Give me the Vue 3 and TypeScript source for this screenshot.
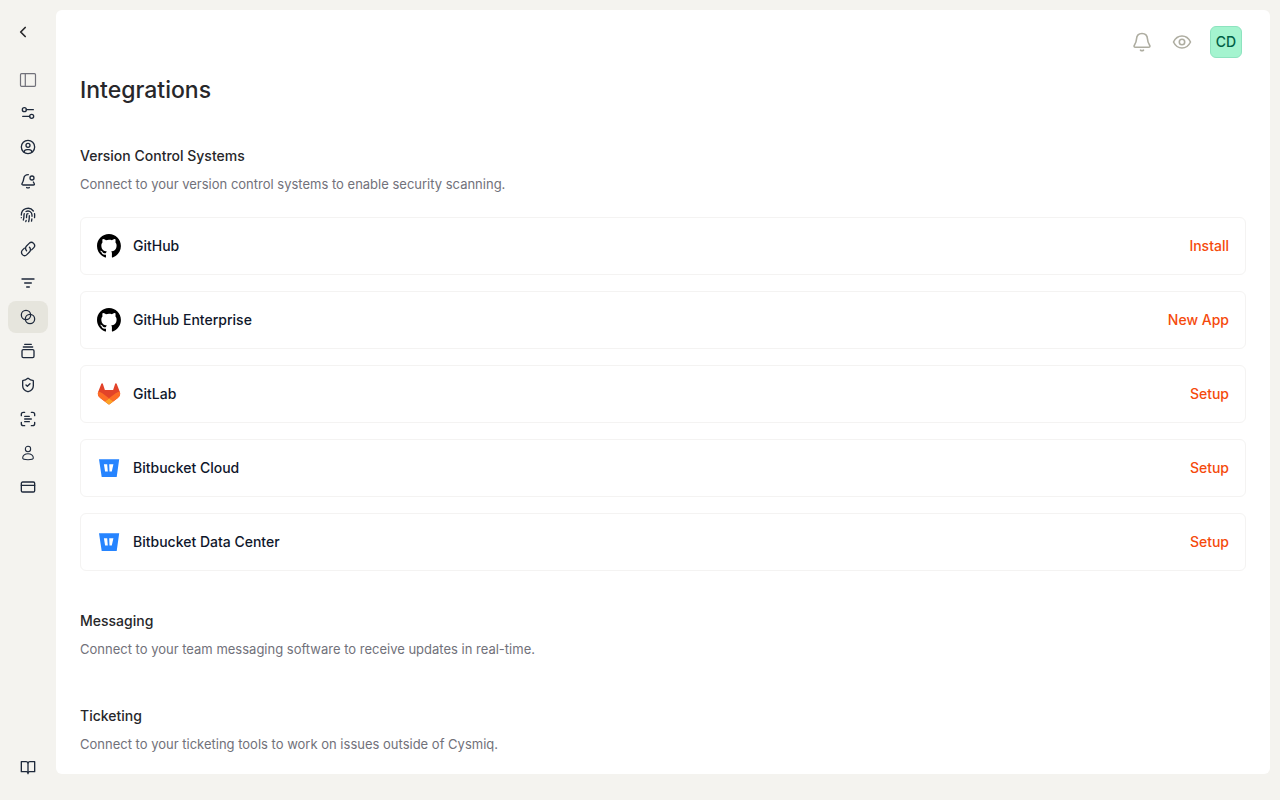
<script setup lang="ts">
interface NavItem {
  id: string
  label: string
  width: number
  paths: string[]
}

interface Integration {
  name: string
  logo: 'github' | 'gitlab' | 'bitbucket'
  action: string
}

interface Section {
  title: string
  description: string
  items: Integration[]
}

const navItems: NavItem[] = [
  { id: 'general', label: 'General', width: 2, paths: ['M9.500 7H20', 'M4 17h10.500', 'M9.500 7a3 3 0 1 1-6 0a3 3 0 1 1 6 0', 'M20.500 17a3 3 0 1 1-6 0a3 3 0 1 1 6 0'] },
  { id: 'profile', label: 'Profile', width: 2, paths: ['M22 12a10 10 0 1 1-20 0a10 10 0 1 1 20 0', 'M15 9.500a3 3 0 1 1-6 0a3 3 0 1 1 6 0', 'M6 19.500c.5-2.500 2-3.500 4.500-3.500h3c2.500 0 4 1 4.500 3.500'] },
  { id: 'notifications', label: 'Notifications', width: 2, paths: ['M12.500 2.500C8.500 2.500 6 5 5.600 8.500C5.200 12.500 4.600 13.500 3.200 15.500C2.300 17 3 18 4.500 18h15.500c1.500 0 2-1 1.300-2.300L20 13.500', 'M10 21.800c1.200.6 2.800.6 4 0', 'M21 7.500a3 3 0 1 1-6 0a3 3 0 1 1 6 0'] },
  { id: 'security', label: 'Security', width: 2, paths: ['M12 10a2 2 0 0 0-2 2c0 1.020-.1 2.510-.26 4', 'M14 13.120c0 2.380 0 6.380-1 8.880', 'M17.290 21.020c.12-.6.43-2.300.5-3.020', 'M2 12a10 10 0 0 1 18-6', 'M2 16h.01', 'M21.800 16c.2-2 .131-5.354 0-6', 'M5 19.500C5.500 18 6 15 6 12a6 6 0 0 1 .34-2', 'M8.650 22c.21-.66.45-1.320.57-2', 'M9 6.800a6 6 0 0 1 9 5.200v2'] },
  { id: 'links', label: 'Links', width: 2, paths: ['M9.800 14.600a5 5 0 0 1 0-7.100l3.900-3.900a4.700 4.700 0 0 1 6.700 6.700l-3 3', 'M14.200 9.400a5 5 0 0 1 0 7.100l-3.900 3.900a4.700 4.700 0 0 1-6.700-6.700l3-3'] },
  { id: 'filters', label: 'Filters', width: 2, paths: ['M3 6h18', 'M7 12h10', 'M10 18h4'] },
  { id: 'integrations', label: 'Integrations', width: 1.9, paths: ['M16 9a7 7 0 1 1-14 0a7 7 0 1 1 14 0', 'M22 15a7 7 0 1 1-14 0a7 7 0 1 1 14 0'] },
  { id: 'assets', label: 'Assets', width: 2, paths: ['M7 2h10', 'M5 6h14', 'M5 10h14a2 2 0 0 1 2 2v8a2 2 0 0 1-2 2H5a2 2 0 0 1-2-2v-8a2 2 0 0 1 2-2z'] },
  { id: 'policies', label: 'Policies', width: 2, paths: ['M20 13c0 5-3.500 7.500-7.660 8.950a1 1 0 0 1-.67-.01C7.500 20.500 4 18 4 13V6a1 1 0 0 1 1-1c2 0 4.500-1.200 6.240-2.720a1.170 1.170 0 0 1 1.520 0C14.510 3.810 17 5 19 5a1 1 0 0 1 1 1z', 'm9 12 2 2 4-4'] },
  { id: 'scans', label: 'Scans', width: 2, paths: ['M2 7V5a3 3 0 0 1 3-3h2', 'M17 2h2a3 3 0 0 1 3 3v2', 'M22 17v2a3 3 0 0 1-3 3h-2', 'M7 22H5a3 3 0 0 1-3-3v-2', 'M7 8h7', 'M7 12h10', 'M7 16h7'] },
  { id: 'members', label: 'Members', width: 1.6, paths: ['M16 6a4 4 0 1 1-8 0a4 4 0 1 1 8 0', 'M12 13c-4.500 0-8 3-8 6.500C4 21.500 8 22 12 22s8-.5 8-2.500C20 16 16.500 13 12 13z'] },
  { id: 'billing', label: 'Billing', width: 2, paths: ['M4 4.500h16a2 2 0 0 1 2 2v11a2 2 0 0 1-2 2H4a2 2 0 0 1-2-2v-11a2 2 0 0 1 2-2z', 'M2 9.500h20'] },
]

const activeItem = 'integrations'

const sections: Section[] = [
  {
    title: 'Version Control Systems',
    description: 'Connect to your version control systems to enable security scanning.',
    items: [
      { name: 'GitHub', logo: 'github', action: 'Install' },
      { name: 'GitHub Enterprise', logo: 'github', action: 'New App' },
      { name: 'GitLab', logo: 'gitlab', action: 'Setup' },
      { name: 'Bitbucket Cloud', logo: 'bitbucket', action: 'Setup' },
      { name: 'Bitbucket Data Center', logo: 'bitbucket', action: 'Setup' },
    ],
  },
  {
    title: 'Messaging',
    description: 'Connect to your team messaging software to receive updates in real-time.',
    items: [],
  },
  {
    title: 'Ticketing',
    description: 'Connect to your ticketing tools to work on issues outside of Cysmiq.',
    items: [],
  },
]
</script>

<template>
  <div class="app">
    <aside class="sidebar">
      <button class="back" type="button" aria-label="Back">
        <svg class="icon" viewBox="0 0 16 16"><path d="M10.200 3.500 5.700 8l4.500 4.500" stroke-width="1.700" /></svg>
      </button>
      <button class="toggle" type="button" aria-label="Toggle sidebar">
        <svg class="toggle-icon" viewBox="0 0 18 18">
          <rect x="1.500" y="2.700" width="15" height="12.600" rx="1" />
          <path d="M6.300 2.700v12.600" />
        </svg>
      </button>
      <nav class="nav" aria-label="Settings">
        <a
          v-for="item in navItems"
          :key="item.id"
          href="#"
          class="nav-link"
          :class="{ active: item.id === activeItem }"
          :aria-label="item.label"
        >
          <svg class="icon" viewBox="0 0 24 24" :stroke-width="item.width">
            <path v-for="d in item.paths" :key="d" :d="d" />
          </svg>
        </a>
      </nav>
      <a href="#" class="nav-link docs" aria-label="Documentation">
        <svg class="icon" viewBox="0 0 24 24" stroke-width="2">
          <path d="M12 6v16" />
          <path d="M2 4h7a3 3 0 0 1 3 2a3 3 0 0 1 3-2h7v15h-7.500a3 3 0 0 0-2.500 1.500A3 3 0 0 0 9.500 19H2z" />
        </svg>
      </a>
    </aside>

    <main class="panel">
      <header class="topbar">
        <button class="top-button" type="button" aria-label="Notifications">
          <svg class="top-icon" viewBox="0 0 20 20">
            <path d="M10 1.500c-3.300 0-5.300 2.300-5.500 5.500c-.2 3-.8 4.300-2 6c-.9 1.300-.4 2.300 1 2.300h13c1.400 0 1.900-1 1-2.300c-1.200-1.700-1.800-3-2-6c-.2-3.200-2.200-5.500-5.500-5.500z" />
            <path d="M8.500 18.200c.9.500 2.100.5 3 0" />
          </svg>
        </button>
        <button class="top-button" type="button" aria-label="Visibility">
          <svg class="top-icon" viewBox="0 0 20 20">
            <path d="M1.500 10C3.300 6.300 6.300 4 10 4s6.700 2.300 8.500 6c-1.800 3.700-4.800 6-8.500 6s-6.700-2.300-8.500-6z" />
            <circle cx="10" cy="10" r="2.700" />
          </svg>
        </button>
        <button class="avatar" type="button">CD</button>
      </header>

      <h1 class="title">Integrations</h1>

      <div class="sections">
        <section v-for="section in sections" :key="section.title">
          <div class="section-head">
            <h2>{{ section.title }}</h2>
            <p>{{ section.description }}</p>
          </div>
          <ul v-if="section.items.length" class="cards">
            <li v-for="item in section.items" :key="item.name" class="card">
              <svg v-if="item.logo === 'github'" class="logo" viewBox="0 0 98 98" aria-hidden="true">
                <path
                  fill="#000"
                  fill-rule="evenodd"
                  d="M48.854 0C21.839 0 0 22 0 49.217c0 21.756 13.993 40.172 33.405 46.690 2.427.49 3.316-1.059 3.316-2.362 0-1.141-.08-5.052-.08-9.127-13.590 2.934-16.420-5.867-16.420-5.867-2.184-5.704-5.420-7.170-5.420-7.170-4.448-3.015.324-3.015.324-3.015 4.934.326 7.523 5.052 7.523 5.052 4.367 7.496 11.404 5.378 14.235 4.074.404-3.178 1.699-5.378 3.074-6.600-10.839-1.141-22.243-5.378-22.243-24.283 0-5.378 1.940-9.778 5.014-13.200-.485-1.222-2.184-6.275.486-13.038 0 0 4.125-1.304 13.426 5.052a46.970 46.970 0 0 1 12.214-1.630c4.125 0 8.330.571 12.213 1.630 9.302-6.356 13.427-5.052 13.427-5.052 2.670 6.763.97 11.816.485 13.038 3.155 3.422 5.015 7.822 5.015 13.200 0 18.905-11.404 23.060-22.324 24.283 1.780 1.548 3.316 4.481 3.316 9.126 0 6.600-.08 11.897-.08 13.526 0 1.304.89 2.853 3.316 2.364 19.412-6.520 33.405-24.935 33.405-46.691C97.707 22 75.788 0 48.854 0z"
                />
              </svg>
              <svg v-else-if="item.logo === 'gitlab'" class="logo" viewBox="-1.040 -1.300 27 27" aria-hidden="true">
                <path fill="#E24329" d="M24.507 9.500l-.034-.09L21.082.562a.896.896 0 0 0-1.694.091l-2.290 7.010H7.825L5.535.653a.898.898 0 0 0-1.694-.09L.451 9.411.416 9.500a6.297 6.297 0 0 0 2.090 7.278l.012.01.03.022 5.160 3.867 2.560 1.935 1.554 1.176a1.051 1.051 0 0 0 1.268 0l1.555-1.176 2.560-1.935 5.197-3.890.014-.01A6.297 6.297 0 0 0 24.507 9.500z" />
                <path fill="#FC6D26" d="M24.507 9.500l-.034-.09a11.440 11.440 0 0 0-4.560 2.051l-7.447 5.632 4.742 3.584 5.197-3.890.014-.01A6.297 6.297 0 0 0 24.507 9.500z" />
                <path fill="#FCA326" d="M7.707 20.677l2.560 1.935 1.555 1.176a1.051 1.051 0 0 0 1.268 0l1.555-1.176 2.560-1.935-4.743-3.584-4.755 3.584z" />
                <path fill="#FC6D26" d="M5.010 11.461A11.430 11.430 0 0 0 .45 9.411L.416 9.500a6.297 6.297 0 0 0 2.090 7.278l.012.01.03.022 5.160 3.867 4.745-3.584-7.444-5.632z" />
              </svg>
              <svg v-else class="logo" viewBox="0 0 24 24" aria-hidden="true">
                <path fill="#2684FF" fill-rule="evenodd" d="M2 3.300h20.200L19.700 21H4.700zM6.900 8.300l1.200 7.200h2.700l-.6-7.200zM12.200 8.300l.3 7.200h2.300l1.600-7.200z" />
              </svg>
              <span class="card-name">{{ item.name }}</span>
              <button class="card-action" type="button">{{ item.action }}</button>
            </li>
          </ul>
        </section>
      </div>
    </main>
  </div>
</template>

<style>
body {
  margin: 0;
  background: #f4f3ef;
}
</style>

<style scoped>
* {
  box-sizing: border-box;
}

.app {
  display: flex;
  min-height: 100vh;
  background: #f4f3ef;
  color: #27272a;
  font-family: Inter, 'Liberation Sans', sans-serif;
  font-size: 14px;
  line-height: 20px;
}

button {
  padding: 0;
  border: 0;
  background: none;
  color: inherit;
  font: inherit;
  cursor: pointer;
}

svg {
  display: block;
  flex: none;
}

.sidebar {
  display: flex;
  flex: none;
  flex-direction: column;
  width: 56px;
  padding: 16px 8px 17px;
  color: #1e293b;
}

.icon,
.toggle-icon,
.top-icon {
  fill: none;
  stroke: currentColor;
  stroke-linecap: round;
  stroke-linejoin: round;
}

.icon {
  width: 16px;
  height: 16px;
}

.back,
.toggle {
  display: flex;
  align-items: center;
  height: 32px;
}

.back {
  width: 32px;
  padding-left: 7px;
  color: #27272a;
}

.toggle {
  justify-content: center;
  margin-top: 16px;
  color: #71717a;
}

.toggle-icon {
  width: 18px;
  height: 18px;
  stroke-width: 1.2;
}

.nav {
  display: flex;
  flex-direction: column;
  gap: 2px;
  margin-top: 1px;
}

.nav-link {
  display: flex;
  align-items: center;
  justify-content: center;
  height: 32px;
  border-radius: 8px;
  color: inherit;
}

.nav-link.active {
  background: #e6e5dd;
}

.docs {
  margin-top: auto;
}

.panel {
  flex: 1;
  min-width: 0;
  margin: 10px 10px 26px 0;
  padding: 16px 24px 8px;
  border-radius: 6px;
  background: #fff;
}

.topbar {
  display: flex;
  align-items: center;
  justify-content: flex-end;
  gap: 8px;
  padding-right: 4px;
}

.top-button {
  display: flex;
  align-items: center;
  justify-content: center;
  width: 32px;
  height: 32px;
  color: #aeada1;
}

.top-icon {
  width: 20px;
  height: 20px;
  stroke-width: 1.6;
}

.avatar {
  width: 32px;
  height: 32px;
  margin-left: 4px;
  border: 1px solid #8de3bf;
  border-radius: 6px;
  background: #a4f4cf;
  color: #006045;
  font-weight: 500;
}

.title {
  margin: 16px 0 38px;
  font-size: 23px;
  font-weight: 500;
  line-height: 32px;
}

.sections {
  display: flex;
  flex-direction: column;
  gap: 38px;
}

.section-head {
  padding-bottom: 6px;
}

.section-head h2 {
  margin: 0 0 6px;
  font-size: 14px;
  font-weight: 500;
  line-height: 24px;
}

.section-head p {
  margin: 0;
  color: #71717a;
  font-size: 13px;
  line-height: 21px;
}

.cards {
  display: flex;
  flex-direction: column;
  gap: 16px;
  margin: 16px 0 0;
  padding: 0;
  list-style: none;
}

.card {
  display: flex;
  align-items: center;
  gap: 12px;
  padding: 16px;
  border: 1px solid #f4f3f2;
  border-radius: 6px;
}

.logo {
  width: 24px;
  height: 24px;
}

.card-name {
  flex: 1;
  color: #0f172b;
  font-weight: 500;
}

.card-action {
  color: #f54a0c;
  font-weight: 500;
}
</style>
